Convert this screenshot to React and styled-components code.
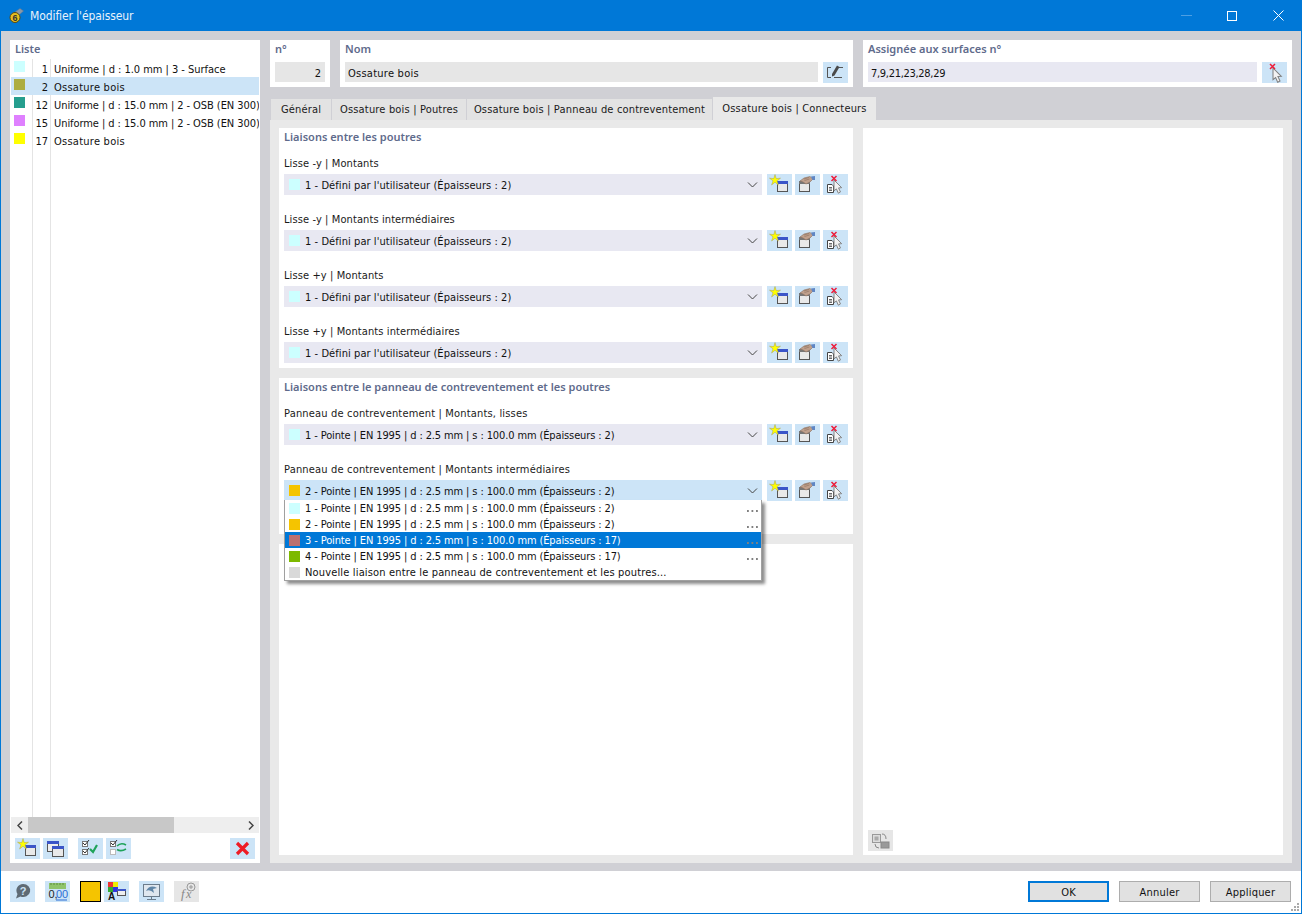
import React from "react";
import styled, { createGlobalStyle } from "styled-components";

const Global = createGlobalStyle`
  html, body { margin: 0; padding: 0; background: #fff; }
  #root { width: 1302px; height: 914px; }
  * { box-sizing: border-box; }
`;

const Window = styled.div`
  width: 1302px; height: 914px; display: flex; flex-direction: column;
  border: 1px solid #0078d7; border-top: none; background: #fff; position: relative;
  font-family: "DejaVu Sans Condensed", "DejaVu Sans", sans-serif; font-stretch: condensed; font-size: 11px; color: #111; line-height: 16px;
`;
const TitleBar = styled.div`
  height: 31px; background: #0078d7; color: #fff; display: flex; align-items: center; margin: 0 -1px;
  padding: 0 1px 0 9px; font-size: 12px; flex: none;
`;
const TitleText = styled.span`margin-left: 6px; flex: 1; color: #e8f2fb; letter-spacing: -.1px;`;
const WinBtn = styled.div`width: 46px; height: 31px; display: flex; align-items: center; justify-content: center;`;
const Main = styled.div`
  flex: 1; background: #d0d0d5; padding: 9px 9px 8px 9px; display: flex; gap: 10px; min-height: 0;
`;
const LeftPanel = styled.div`
  width: 250px; background: #fff; display: flex; flex-direction: column; padding: 1px; flex: none;
`;
const Heading = styled.div`
  font-family: "Noto Sans", sans-serif; font-stretch: normal; font-weight: 600; color: #5f6b8c; height: 18px;
  padding-left: ${p => p.$pad ?? 4}px; line-height: 16px; flex: none;
`;
const ListBody = styled.div`flex: 1; position: relative; min-height: 0;`;
const ListRow = styled.div`
  height: 18px; display: grid; grid-template-columns: 21px 1px 17px 1px 1fr; align-items: start;
  background: ${p => (p.$selected ? "#cce4f7" : "transparent")}; white-space: nowrap; overflow: hidden;
`;
const ColLine = styled.div`align-self: stretch; background: ${p => (p.$none ? "transparent" : "#e4e4e4")};`;
const Swatch = styled.span`
  display: block; width: 11px; height: 11px; background: ${p => p.$c}; flex: none;
`;
const ListSwatchCell = styled.div`padding-left: 3px; align-self: stretch; display: flex; align-items: flex-start; padding-top: 2px;`;
const Num = styled.div`text-align: right; margin-left: -4px; padding-right: 2px; padding-top: 3px;`;
const ListText = styled.div`padding-left: 3px; padding-top: 3px; letter-spacing: ${p => p.$ls}px;`;
const GuideLines = styled.div`
  position: absolute; left: 21px; top: 90px; bottom: 0; width: 19px;
  border-left: 1px solid #e4e4e4; border-right: 1px solid #e4e4e4;
`;
const Scrollbar = styled.div`
  height: 16px; background: #eeeeee; display: flex; align-items: center; flex: none; position: relative; margin-bottom: 5px;
`;
const ScrollArrow = styled.div`width: 17px; height: 16px; display: flex; align-items: center; justify-content: center; flex: none;`;
const Thumb = styled.div`width: 146px; height: 16px; background: #c8c8c8; flex: none;`;
const ScrollFill = styled.div`flex: 1;`;
const ListToolbar = styled.div`display: flex; height: 24px; padding: 0 4px; gap: 3px; flex: none; align-items: flex-start;`;
const Spacer = styled.div`flex: ${p => p.$w ? `0 0 ${p.$w}px` : 1};`;
const IconBtn = styled.div`
  width: 25px; height: 21px; background: ${p => p.$bg || "#cce4f7"}; display: flex; align-items: center;
  justify-content: center; flex: none;
`;
const RightArea = styled.div`flex: 1; display: flex; flex-direction: column; min-width: 0;`;
const TopRow = styled.div`display: flex; gap: 10px; height: 47px; flex: none;`;
const TopCard = styled.div`
  background: #fff; width: ${p => p.$w}px; padding: 1px 5px 0; display: flex; flex-direction: column; flex: none;
`;
const TopHeading = styled(Heading)`padding-left: 0; height: 21px; padding-top: 0;`;
const InputRow = styled.div`display: flex; gap: 5px;`;
const TextField = styled.div`
  height: 20px; flex: 1; background: ${p => p.$bg}; padding: 0 4px 0 3px; line-height: 23px; text-align: ${p => p.$right ? "right" : "left"};
  white-space: nowrap; letter-spacing: ${p => p.$ls ?? 0}px;
`;
const Tabs = styled.div`display: flex; height: 23px; margin-top: 10px; flex: none; align-items: flex-end; padding-left: 1px; gap: 1px;`;
const Tab = styled.div`
  height: ${p => p.$active ? 23 : 21}px; width: ${p => p.$w}px; background: ${p => p.$active ? "#e9e9e9" : "#e3e3e3"};
  text-align: center; line-height: ${p => p.$active ? 23 : 21}px; white-space: nowrap; color: #1a1a1a; letter-spacing: .17px;
`;
const TabBody = styled.div`
  flex: 1; background: #e9e9e9; padding: 8px 9px 8px; display: flex; gap: 10px; min-height: 0;
`;
const Column = styled.div`width: 574px; display: flex; flex-direction: column; gap: 10px; flex: none;`;
const Card = styled.div`
  background: #fff; padding: 1px 5px 0; position: relative; flex: ${p => p.$grow ? 1 : "none"}; height: ${p => p.$h ? p.$h + "px" : "auto"};
`;
const CardHeading = styled(Heading)`padding-left: 0; height: 27px;`;
const FieldBlock = styled.div`height: 56px; position: relative;`;
const FieldLabel = styled.div`height: 18px; line-height: 16px; color: #1a1a1a; letter-spacing: ${p => p.$ls}px;`;
const SelectRow = styled.div`display: flex; height: 21px; gap: 3px; position: relative;`;
const Select = styled.div`
  width: 478px; height: 21px; margin-right: 2px; background: ${p => p.$open ? "#cce4f7" : "#e8e8f2"}; display: flex; align-items: center;
  padding-left: 5px; flex: none; white-space: nowrap;
`;
const SelectText = styled.span`margin-left: 5px; flex: 1; padding-top: 2px; letter-spacing: ${p => p.$ls}px;`;
const Chevron = styled.div`width: 18px; margin-right: 1px; display: flex; justify-content: center;`;
const Dropdown = styled.div`
  position: absolute; left: 0; top: 20px; width: 478px; height: 81px; background: #fff; border: 1px solid #a0a0a0; border-top: none;
  box-shadow: 3px 3px 3px rgba(0,0,0,.45); z-index: 5;
`;
const DropRow = styled.div`
  height: 16px; display: flex; align-items: center; padding-left: 4px; background: ${p => p.$active ? "#0078d7" : "transparent"};
  color: ${p => p.$active ? "#fff" : "#111"}; white-space: nowrap; position: relative;
`;
const Dots = styled.span`
  position: absolute; right: 3px; top: 10px; width: 11px; height: 2px;
  background-image: linear-gradient(90deg, #808080 2px, transparent 2px); background-size: 4.500px 2px;
`;
const RightCard = styled.div`flex: 1; background: #fff; position: relative; display: flex; flex-direction: column; justify-content: flex-end; padding: 0 0 4px 5px;`;
const Footer = styled.div`height: 42px; flex: none; display: flex; align-items: flex-start; padding: 10px 10px 0 9px;`;
const FootBtn = styled.div`
  width: 81px; height: 21px; background: #e1e1e1; border: ${p => p.$def ? "2px solid #0078d7" : "1px solid #adadad"};
  text-align: center; line-height: ${p => p.$def ? 19 : 21}px; margin-left: ${p => p.$ml ?? 10}px; color: #111; letter-spacing: .2px;
`;
const BigSwatch = styled.div`width: 21px; height: 21px; background: #f5c400; border: 1px solid #000; flex: none;`;
const Grip = styled.svg`position: absolute; right: 1px; bottom: 1px;`;

/* icons */
const I = ({ children }) => <svg width="25" height="21" viewBox="0 0 25 21">{children}</svg>;
const WinShape = ({ x = 10, y = 7 }) => (<g>
  <rect x={x + .5} y={y + .5} width="10" height="10" fill="#e9e9e9" stroke="#555" />
  <rect x={x} y={y} width="11" height="3" fill="#3b55c8" />
</g>);
const Star = ({ x = 8, y = 6 }) => <polygon transform={`translate(${x} ${y})`} points="0,-5.500 1.2,-1.400 5.500,-1.800 2,.8 3.400,5 0,2.200 -3.400,5 -2,.8 -5.500,-1.800 -1.200,-1.400" fill="#ffff00" stroke="#a8a050" strokeWidth=".5" />;
const NewIcon = () => <I><WinShape /><Star /></I>;
const HandIcon = () => <I>
  <rect x="4.500" y="7.500" width="10" height="10" fill="#e9e9e9" stroke="#555" />
  <rect x="4" y="7" width="11" height="3" fill="#777" />
  <path d="M5 7 L9 4 L15 2.500 L18 5 L15 8 L11 10 L8 8 Z" fill="#c0a08c" stroke="#8a6e5c" strokeWidth=".6" />
  <path d="M9 5 l5 -1.500 M9.500 6.500 l5 -1.500" stroke="#8a6e5c" strokeWidth=".6" />
  <path d="M16 2.500 L20 2 L20 6 L17.500 6Z" fill="#5f86c4" />
</I>;
const Cursor = ({ x = 11, y = 5, s = 1.2 }) => <path transform={`translate(${x} ${y}) scale(${s})`} d="M0 0 L0 9 L2 7.4 L3.6 11 L5.4 10 L3.8 6.6 L6.4 6.4 Z" fill="#f2f2f2" stroke="#808080" strokeWidth=".8" />;
const RedX = ({ x = 10, y = 5 }) => <path transform={`translate(${x} ${y})`} d="M-2.5 -2.5 L2.5 2.5 M2.5 -2.5 L-2.5 2.5" stroke="#ee1c3a" strokeWidth="1.5" />;
const DelIcon = () => <I>
  <path d="M4.500 10.500 H9 L10.500 12 V18.500 H4.500 Z" fill="#fff" stroke="#444" />
  <path d="M6 13.500h3M6 15h3M6 16.500h3" stroke="#444" strokeWidth=".8" />
  <Cursor x={11} y={6} /><RedX x={11} y={4.500} />
</I>;
const PickIcon = () => <I><Cursor x={11} y={6} s={1.3} /><RedX x={10.500} y={4.500} /></I>;
const EditIcon = () => <I>
  <path d="M8 5.500 H4.500 V15.500 H8 M11 15.500 H19 M16 5.500 H20" stroke="#555" fill="none" />
  <path d="M9 12 L14 3.500 L16.500 5 L11.500 13.500 L9 14.500 Z" fill="#4a4a4a" />
</I>;
const CopyIcon = () => <I>
  <rect x="4.500" y="3.500" width="11" height="10" fill="#eee" stroke="#555" /><rect x="4" y="3" width="12" height="3" fill="#3b55c8" />
  <rect x="9.500" y="8.500" width="11" height="10" fill="#e9e9e9" stroke="#555" /><rect x="9" y="8" width="12" height="3" fill="#3b55c8" />
</I>;
const Check = ({ x, y, on = true }) => <g>
  <rect x={x + .5} y={y + .5} width="5" height="5" fill="#fff" stroke={on ? "#777" : "#bbb"} />
  {on && <path d={`M${x + 1} ${y + 2} l2 2 l4 -5`} stroke="#333" fill="none" />}
</g>;
const CheckAllIcon = () => <I><Check x={4} y={3} /><Check x={4} y={11} />
  <path d="M12 11 L15 14 L19 7" stroke="#1fa35a" strokeWidth="2.200" fill="none" /></I>;
const CheckSwapIcon = () => <I><Check x={4} y={3} /><Check x={4} y={11} on={false} />
  <path d="M11 8 Q15 4 20 7 M20 11 Q15 14 11 11.500" stroke="#1fa35a" strokeWidth="1.600" fill="none" /></I>;
const DeleteBig = () => <I><path d="M7 5 L18 16 M18 5 L7 16" stroke="#ee1c25" strokeWidth="3.200" /></I>;
const HelpIcon = () => <I>
  <path d="M13 3 a7 6.500 0 1 1 -2.500 12.500 L6 17.500 L7.500 13 A7 6.500 0 0 1 13 3Z" fill="#5f6b75" />
  <text x="13" y="13.500" textAnchor="middle" fontSize="11" fontWeight="700" fill="#cce4f7" fontFamily="Liberation Sans">?</text>
</I>;
const UnitsIcon = () => <I>
  <rect x="4" y="2" width="17" height="6" fill="#8fc46b" />
  <path d="M6 2v2M9 2v2M12 2v2M15 2v2M18 2v2" stroke="#5d8d40" />
  <text x="3.500" y="17" fontSize="11" fontFamily="Liberation Sans" fill="#222">0,</text>
  <text x="11" y="17" fontSize="11" fontFamily="Liberation Sans" fill="#2b6cd4">00</text>
  <path d="M11 19h11" stroke="#2b6cd4" />
</I>;
const ColorsIcon = () => <I>
  <rect x="4" y="1" width="5" height="5" fill="#e33" /><rect x="9" y="1" width="5" height="5" fill="#ee0" />
  <rect x="4" y="6" width="5" height="5" fill="#3a3" /><rect x="9" y="6" width="5" height="5" fill="#33d" />
  <text x="4" y="19" fontSize="10" fontWeight="700" fontFamily="Liberation Sans" fill="#111">A</text>
  <rect x="13.500" y="8.500" width="8" height="6" fill="#eee" stroke="#555" /><rect x="13" y="8" width="9" height="2" fill="#3b55c8" />
</I>;
const ScreenIcon = () => <I>
  <rect x="4.500" y="3.500" width="16" height="12" fill="#dfe7ef" stroke="#6b7c8c" />
  <path d="M7 10 Q11 3 18 7 L14 8 L15 12 Q11 8 7 10Z" fill="#5f86a8" />
  <path d="M12.500 15v3M8 18.500h9" stroke="#6b7c8c" />
</I>;
const FxIcon = () => <I>
  <text x="7" y="17" fontSize="13" fontStyle="italic" fontFamily="Liberation Serif" fill="#888">f</text>
  <text x="12" y="17" fontSize="12" fontStyle="italic" fontFamily="Liberation Serif" fill="#888">x</text>
  <circle cx="17" cy="6" r="4" fill="none" stroke="#999" /><path d="M15 6h4M17 4v4" stroke="#999" />
</I>;
const SwapDocIcon = () => <I>
  <rect x="4.500" y="4.500" width="8" height="8" fill="#ddd" stroke="#999" />
  <rect x="6.500" y="6.500" width="4" height="4" fill="#aaa" />
  <rect x="13" y="12" width="8" height="6" fill="#999" stroke="#888" />
  <path d="M14 4 Q18 4 18 9 M11 18 Q7 18 7 14" stroke="#888" fill="none" />
</I>;

const Ch = () => <svg width="11" height="6" viewBox="0 0 11 6"><path d="M1 .5 L5.500 5 L10 .5" stroke="#444" fill="none" /></svg>;

const listData = [
  ["#ccffff", "1", "Uniforme | d : 1.0 mm | 3 - Surface", -.03],
  ["#adad41", "2", "Ossature bois", .25],
  ["#259e8e", "12", "Uniforme | d : 15.0 mm | 2 - OSB (EN 300)", -.07],
  ["#df80ff", "15", "Uniforme | d : 15.0 mm | 2 - OSB (EN 300)", -.07],
  ["#ffff00", "17", "Ossature bois", .25],
];
const d = "1 - Défini par l'utilisateur (Épaisseurs : 2)";
const Actions = () => <><IconBtn><NewIcon /></IconBtn><IconBtn><HandIcon /></IconBtn><IconBtn><DelIcon /></IconBtn></>;

const Field = ({ label, value, children, open, color = "#ccffff", ls = .07, labelLs = .1 }) => (
  <FieldBlock>
    <FieldLabel $ls={labelLs}>{label}</FieldLabel>
    <SelectRow>
      <Select $open={open}><Swatch $c={color} /><SelectText $ls={ls}>{value}</SelectText><Chevron><Ch /></Chevron></Select>
      <Actions />
      {children}
    </SelectRow>
  </FieldBlock>
);

const dropData = [
  ["#ccffff", "1 - Pointe | EN 1995 | d : 2.5 mm | s : 100.0 mm (Épaisseurs : 2)", true, false, -.12],
  ["#f5c400", "2 - Pointe | EN 1995 | d : 2.5 mm | s : 100.0 mm (Épaisseurs : 2)", true, false, -.12],
  ["#bc7070", "3 - Pointe | EN 1995 | d : 2.5 mm | s : 100.0 mm (Épaisseurs : 17)", true, true, -.12],
  ["#7db900", "4 - Pointe | EN 1995 | d : 2.5 mm | s : 100.0 mm (Épaisseurs : 17)", true, false, -.12],
  ["#d9d9d9", "Nouvelle liaison entre le panneau de contreventement et les poutres...", false, false, .157],
];

export default function App() {
  return (
    <Window>
      <Global />
      <TitleBar>
        <svg width="15" height="15" viewBox="0 0 15 15">
          <path d="M6 4 L11 0.500 L14.500 3 L10 7Z" fill="#8a98a8" stroke="#6a7888" strokeWidth=".5" />
          <circle cx="6" cy="9.500" r="5" fill="#e8c020" stroke="#5b4a10" />
          <text x="6" y="13" textAnchor="middle" fontSize="9" fontWeight="700" fontFamily="Liberation Sans" fill="#333">6</text>
        </svg>
        <TitleText>Modifier l'épaisseur</TitleText>
        <WinBtn><svg width="11" height="1"><rect width="11" height="1" fill="#4d9fe3" /></svg></WinBtn>
        <WinBtn><svg width="10" height="10"><rect x=".5" y=".5" width="9" height="9" fill="none" stroke="#fff" /></svg></WinBtn>
        <WinBtn><svg width="11" height="11"><path d="M.5 .5 L10.500 10.500 M10.500 .5 L.5 10.500" stroke="#fff" /></svg></WinBtn>
      </TitleBar>
      <Main>
        <LeftPanel>
          <Heading>Liste</Heading>
          <ListBody>
            {listData.map(([c, n, t, ls], i) => (
              <ListRow key={n} $selected={i === 1}>
                <ListSwatchCell><Swatch $c={c} /></ListSwatchCell>
                <ColLine $none={i === 1} />
                <Num>{n}</Num>
                <ColLine $none={i === 1} />
                <ListText $ls={ls}>{t}</ListText>
              </ListRow>
            ))}
            <GuideLines />
          </ListBody>
          <Scrollbar>
            <ScrollArrow><svg width="6" height="9"><path d="M5 .5 L1 4.500 L5 8.500" stroke="#444" strokeWidth="1.500" fill="none" /></svg></ScrollArrow>
            <Thumb /><ScrollFill />
            <ScrollArrow><svg width="6" height="9"><path d="M1 .5 L5 4.500 L1 8.500" stroke="#444" strokeWidth="1.500" fill="none" /></svg></ScrollArrow>
          </Scrollbar>
          <ListToolbar>
            <IconBtn><NewIcon /></IconBtn><IconBtn><CopyIcon /></IconBtn>
            <Spacer $w={4} />
            <IconBtn><CheckAllIcon /></IconBtn><IconBtn><CheckSwapIcon /></IconBtn>
            <Spacer />
            <IconBtn><DeleteBig /></IconBtn>
          </ListToolbar>
        </LeftPanel>
        <RightArea>
          <TopRow>
            <TopCard $w={60}><TopHeading>n°</TopHeading><InputRow><TextField $bg="#e6e6e6" $right>2</TextField></InputRow></TopCard>
            <TopCard $w={513}><TopHeading>Nom</TopHeading><InputRow><TextField $bg="#e6e6e6" $ls={.25}>Ossature bois</TextField><IconBtn><EditIcon /></IconBtn></InputRow></TopCard>
            <TopCard $w={429}><TopHeading>Assignée aux surfaces n°</TopHeading><InputRow><TextField $bg="#e8e8f2" $ls={-.3}>7,9,21,23,28,29</TextField><IconBtn><PickIcon /></IconBtn></InputRow></TopCard>
          </TopRow>
          <Tabs>
            <Tab $w={60}>Général</Tab>
            <Tab $w={134}>Ossature bois | Poutres</Tab>
            <Tab $w={245}>Ossature bois | Panneau de contreventement</Tab>
            <Tab $w={163} $active>Ossature bois | Connecteurs</Tab>
          </Tabs>
          <TabBody>
            <Column>
              <Card $h={240}>
                <CardHeading>Liaisons entre les poutres</CardHeading>
                <Field label="Lisse -y | Montants" value={d} />
                <Field label="Lisse -y | Montants intermédiaires" value={d} />
                <Field label="Lisse +y | Montants" value={d} />
                <Field label="Lisse +y | Montants intermédiaires" value={d} />
              </Card>
              <Card $h={156}>
                <CardHeading>Liaisons entre le panneau de contreventement et les poutres</CardHeading>
                <Field labelLs={.17} ls={-.12} label="Panneau de contreventement | Montants, lisses" value="1 - Pointe | EN 1995 | d : 2.5 mm | s : 100.0 mm (Épaisseurs : 2)" />
                <Field labelLs={.17} ls={-.12} label="Panneau de contreventement | Montants intermédiaires" value="2 - Pointe | EN 1995 | d : 2.5 mm | s : 100.0 mm (Épaisseurs : 2)" open color="#f5c400">
                  <Dropdown>
                    {dropData.map(([c, t, dots, act, ls]) => (
                      <DropRow key={t} $active={act}><Swatch $c={c} /><SelectText $ls={ls}>{t}</SelectText>{dots && <Dots />}</DropRow>
                    ))}
                  </Dropdown>
                </Field>
              </Card>
              <Card $grow />
            </Column>
            <RightCard><IconBtn $bg="#e6e6e6"><SwapDocIcon /></IconBtn></RightCard>
          </TabBody>
        </RightArea>
      </Main>
      <Footer>
        <IconBtn><HelpIcon /></IconBtn>
        <Spacer $w={10} />
        <IconBtn><UnitsIcon /></IconBtn>
        <Spacer $w={10} />
        <BigSwatch />
        <Spacer $w={3} />
        <IconBtn><ColorsIcon /></IconBtn>
        <Spacer $w={10} />
        <IconBtn><ScreenIcon /></IconBtn>
        <Spacer $w={10} />
        <IconBtn $bg="#e6e6e6"><FxIcon /></IconBtn>
        <Spacer />
        <FootBtn $def>OK</FootBtn>
        <FootBtn>Annuler</FootBtn>
        <FootBtn>Appliquer</FootBtn>
      </Footer>
      <Grip width="10" height="10" viewBox="0 0 10 10">
        <path d="M7 1h2v2H7zM4 4h2v2H4zM7 4h2v2H7zM1 7h2v2H1zM4 7h2v2H4zM7 7h2v2H7z" fill="#aaa" />
      </Grip>
    </Window>
  );
}
